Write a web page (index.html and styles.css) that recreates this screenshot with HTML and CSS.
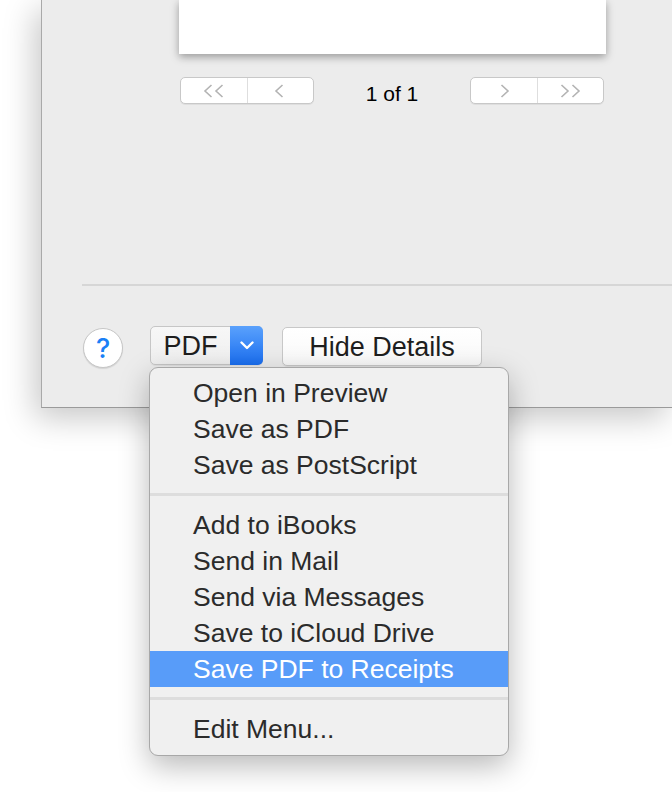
FILE: index.html
```html
<!DOCTYPE html>
<html>
<head>
<meta charset="utf-8">
<link rel="stylesheet" href="styles.css">
</head>
<body>
<div class="dialog">
  <div class="page"></div>
  <div class="pager">
    <div class="seg">
      <span class="seg-btn"><svg width="24" height="14" viewBox="0 0 24 14"><polyline points="9.5,1 3,7 9.5,13"/><polyline points="20.5,1 14,7 20.5,13"/></svg></span>
      <span class="seg-btn"><svg width="12" height="14" viewBox="0 0 12 14"><polyline points="8.5,1 2,7 8.5,13"/></svg></span>
    </div>
    <div class="count">1 of 1</div>
    <div class="seg">
      <span class="seg-btn"><svg width="12" height="14" viewBox="0 0 12 14"><polyline points="3.5,1 10,7 3.5,13"/></svg></span>
      <span class="seg-btn"><svg width="24" height="14" viewBox="0 0 24 14"><polyline points="3.5,1 10,7 3.5,13"/><polyline points="14.5,1 21,7 14.5,13"/></svg></span>
    </div>
  </div>
  <div class="rule"></div>
  <div class="actions">
    <div class="help">?</div>
    <div class="pdf">
      <span class="pdf-label">PDF</span>
      <span class="pdf-arrow"><svg width="14" height="9" viewBox="0 0 14 9"><polyline points="1.5,1.5 7,7 12.5,1.5"/></svg></span>
    </div>
    <div class="btn">Hide Details</div>
  </div>
</div>
<div class="menu">
  <div class="item">Open in Preview</div>
  <div class="item">Save as PDF</div>
  <div class="item">Save as PostScript</div>
  <div class="sep"></div>
  <div class="item">Add to iBooks</div>
  <div class="item">Send in Mail</div>
  <div class="item">Send via Messages</div>
  <div class="item">Save to iCloud Drive</div>
  <div class="item active">Save PDF to Receipts</div>
  <div class="sep"></div>
  <div class="item">Edit Menu...</div>
</div>
</body>
</html>
```
FILE: styles.css
```css
html, body {
  margin: 0;
  padding: 0;
  background: #ffffff;
}
body {
  width: 672px;
  height: 792px;
  overflow: hidden;
  position: relative;
  font-family: "Liberation Sans", Arial, sans-serif;
}
.dialog {
  margin-left: 41px;
  height: 407px;
  background: #ececec;
  border-left: 1px solid #a9a9a9;
  border-bottom: 1px solid #9a9a9a;
  box-shadow: -6px 10px 30px rgba(0, 0, 0, 0.22);
  overflow: hidden;
}
.page {
  margin-left: 137px;
  width: 427px;
  height: 54px;
  background: #ffffff;
  box-shadow: 0 3px 8px rgba(0, 0, 0, 0.35);
}
.pager {
  display: flex;
  align-items: center;
  margin: 23px 0 0 138px;
  height: 27px;
}
.seg {
  display: flex;
  width: 134px;
  height: 27px;
  box-sizing: border-box;
  border: 1px solid #c8c8c8;
  border-radius: 5px;
  background: #ffffff;
  box-shadow: 0 1px 0 rgba(0, 0, 0, 0.06);
}
.seg-btn {
  flex: 1;
  display: flex;
  align-items: center;
  justify-content: center;
}
.seg-btn + .seg-btn {
  border-left: 1px solid #dedede;
}
.seg-btn svg polyline {
  fill: none;
  stroke: #b3b3b3;
  stroke-width: 1.6;
}
.count {
  width: 156px;
  text-align: center;
  font-size: 21px;
  color: #000000;
  padding-top: 7px;
}
.rule {
  margin: 180px 0 0 40px;
  height: 2px;
  background: #d6d6d6;
}
.actions {
  display: flex;
  align-items: flex-start;
  margin: 40px 0 0 41px;
}
.help {
  width: 40px;
  height: 40px;
  margin-top: 2px;
  box-sizing: border-box;
  border-radius: 50%;
  background: #ffffff;
  border: 1px solid #c6c6c6;
  box-shadow: 0 1px 1px rgba(0, 0, 0, 0.1);
  display: flex;
  align-items: center;
  justify-content: center;
  color: #1a80f6;
  font-family: Inter, "Liberation Sans", sans-serif;
  font-weight: 500;
  font-size: 27px;
}
.pdf {
  margin-left: 27px;
  display: flex;
  width: 113px;
  height: 39px;
  box-sizing: border-box;
  border: 1px solid #c6c6c6;
  border-radius: 5px;
  background: linear-gradient(#f7f7f7, #efefef);
  box-shadow: 0 1px 0 rgba(0, 0, 0, 0.05);
}
.pdf-label {
  width: 79px;
  display: flex;
  align-items: center;
  justify-content: center;
  padding-top: 2px;
  font-size: 27px;
  color: #1e1e1e;
}
.pdf-arrow {
  flex: 1;
  margin: -1px -1px -1px 0;
  border-radius: 0 5px 5px 0;
  background: linear-gradient(#5aa1fc, #1a6ef0);
  display: flex;
  align-items: center;
  justify-content: center;
}
.pdf-arrow svg polyline {
  fill: none;
  stroke: #ffffff;
  stroke-width: 2.4;
  stroke-linecap: round;
  stroke-linejoin: round;
}
.btn {
  margin: 1px 0 0 19px;
  width: 200px;
  height: 39px;
  box-sizing: border-box;
  border: 1px solid #c8c8c8;
  border-radius: 5px;
  background: linear-gradient(#ffffff, #f9f9f9);
  box-shadow: 0 1px 0 rgba(0, 0, 0, 0.06);
  display: flex;
  align-items: center;
  justify-content: center;
  padding-top: 1px;
  font-size: 27px;
  color: #1e1e1e;
}
.menu {
  position: absolute;
  left: 149px;
  top: 367px;
  width: 360px;
  box-sizing: border-box;
  padding: 7px 0 8px;
  background: #f0f0f0;
  border: 1px solid #a8a8a8;
  border-radius: 9px;
  box-shadow: 0 10px 30px rgba(0, 0, 0, 0.28);
}
.item {
  height: 36px;
  line-height: 36px;
  padding-left: 43px;
  font-size: 26.5px;
  color: #2b2b2b;
  white-space: nowrap;
}
.item.active {
  background: #589cf9;
  color: #ffffff;
}
.sep {
  height: 3px;
  margin: 10px 0 11px;
  background: #dddddd;
}
```
